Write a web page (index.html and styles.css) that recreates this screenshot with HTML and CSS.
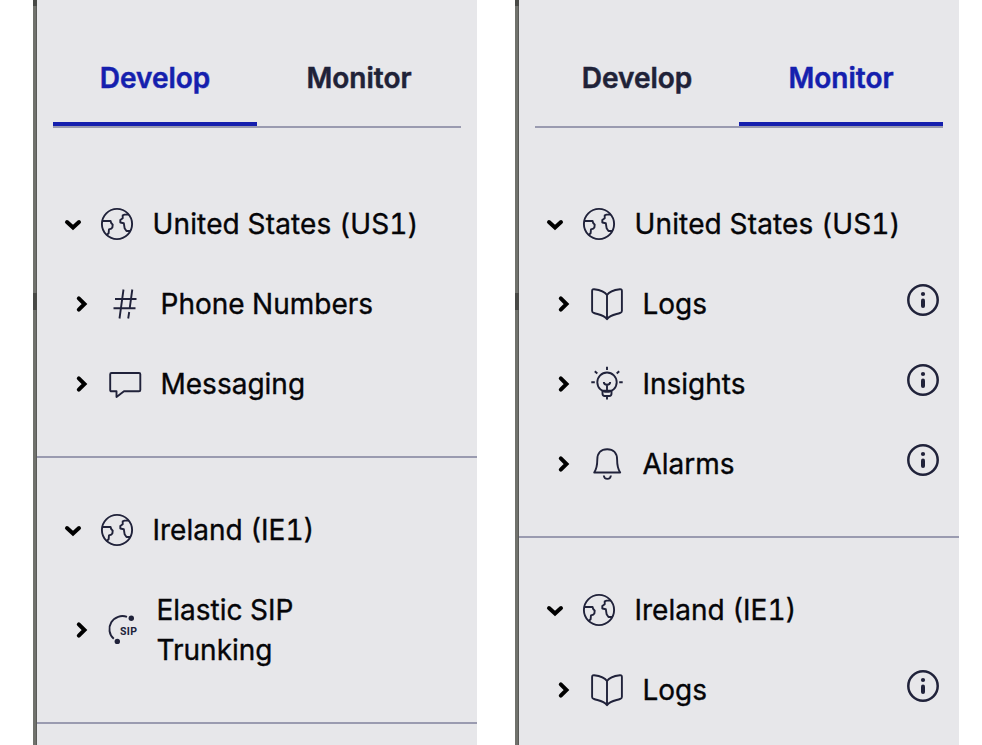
FILE: index.html
```
<!DOCTYPE html>
<html lang="en">
<head>
<meta charset="utf-8">
<title>Console navigation</title>
<link rel="stylesheet" href="styles.css">
</head>
<body>
<svg class="defs" width="0" height="0" aria-hidden="true">
  <symbol id="down" viewBox="0 0 16 16"><path d="M2 6 8 11.500l6-5.500" stroke-width="4" stroke-linecap="round"/></symbol>
  <symbol id="right" viewBox="0 0 16 16"><path d="M4.800 2.300 10.500 8l-5.700 5.700" stroke-width="4" stroke-linecap="round"/></symbol>
  <symbol id="globe" viewBox="0 0 32 32"><circle cx="16" cy="16" r="15.100"/><path d="M1.400 13H9.600L10.200 15L11.700 16.600L11.400 19.400L10.300 20.600L8 21.300L7.600 25.300L5.400 27.300M27.800 6.600H23.500L21.700 7.300V10.200L19.300 12V14.500L22.800 15.200L23.600 20.200L25.500 23H29"/></symbol>
  <symbol id="hash" viewBox="0 0 32 32"><path d="M14.500 1.500 10.500 30.500M23.300 1.500 20.600 21M20.200 24 19.200 30.500M6 11h21.500M4.500 20.200h22"/></symbol>
  <symbol id="message" viewBox="0 0 32 32"><path d="M2.500 5h27.500q1.300 0 1.300 1.300v15.700q0 1.300-1.300 1.300H15l-7.500 5.700v-5.700h-5q-1.300 0-1.300-1.300V6.300Q1.200 5 2.500 5Z"/></symbol>
  <symbol id="book" viewBox="0 0 32 32"><path d="M16 7v24.200C12.500 26.500 7 26.500 3 25q-1.900-.5-1.900-2V3q0-2 2-1.800C8 1.800 13.500 3 16 7 18.500 3 24 1.800 28.900 1.200q2-.2 2 1.800v20q0 1.500-1.900 2C25 26.500 19.500 26.500 16 31.200"/></symbol>
  <symbol id="bulb" viewBox="0 0 32 32"><circle cx="16" cy="14.200" r="9.700"/><path d="M16-1.300V2M.3 14.200h3.500M28.200 14.200h3.500M3.800 3.200l2.500 2.300M28.200 3.200l-2.500 2.300M16 23v-6.300c-2.300 0-3.200-1-3.200-2.700M16 16.700c2.300 0 3.200-1 3.200-2.700M11.500 22.700h9v2.800q0 2.500-2.200 2.500h-4.600q-2.200 0-2.200-2.500ZM16 28.300v3.200"/></symbol>
  <symbol id="bell" viewBox="0 0 32 32"><path d="M3.200 24.500C5.500 21 6.300 18 6.300 11.500 6.300 5 10 1.200 16.200 1.200S26.100 5 26.100 11.500c0 6.500.8 9.500 3.100 13ZM12.800 27.500c.5 4.500 6.600 4.500 7.100 0"/></symbol>
  <symbol id="info" viewBox="0 0 32 32"><circle cx="16" cy="16" r="14.700" stroke-width="2.500"/><path d="M16 16.500v5.400" stroke-width="4" stroke-linecap="round"/><circle class="solid" cx="16" cy="10" r="2.100"/></symbol>
</svg>
<main class="board">
  <section class="panel">
    <nav class="tabs"><a class="tab active">Develop</a><a class="tab">Monitor</a></nav>
    <div class="group first">
      <div class="row heading"><svg class="chevron"><use href="#down"/></svg><svg class="icon"><use href="#globe"/></svg><span class="label">United States (US1)</span></div>
      <div class="row"><svg class="chevron"><use href="#right"/></svg><svg class="icon"><use href="#hash"/></svg><span class="label">Phone Numbers</span></div>
      <div class="row"><svg class="chevron"><use href="#right"/></svg><svg class="icon"><use href="#message"/></svg><span class="label">Messaging</span></div>
    </div>
    <div class="group">
      <div class="row heading"><svg class="chevron"><use href="#down"/></svg><svg class="icon"><use href="#globe"/></svg><span class="label">Ireland (IE1)</span></div>
      <div class="row tall"><svg class="chevron"><use href="#right"/></svg><svg class="icon" viewBox="0 0 32 32"><path d="M18 2.900A13 13 0 0 0 4.800 24.800"/><g class="solid"><circle cx="22.300" cy="4.300" r="2.700"/><circle cx="8.300" cy="27.400" r="2.700"/><text x="11" y="20.800" textLength="17" lengthAdjust="spacing">SIP</text></g></svg><span class="label">Elastic SIP<br>Trunking</span></div>
    </div>
  </section>
  <section class="panel">
    <nav class="tabs"><a class="tab">Develop</a><a class="tab active">Monitor</a></nav>
    <div class="group first">
      <div class="row heading"><svg class="chevron"><use href="#down"/></svg><svg class="icon"><use href="#globe"/></svg><span class="label">United States (US1)</span></div>
      <div class="row"><svg class="chevron"><use href="#right"/></svg><svg class="icon"><use href="#book"/></svg><span class="label">Logs</span><svg class="icon info"><use href="#info"/></svg></div>
      <div class="row"><svg class="chevron"><use href="#right"/></svg><svg class="icon"><use href="#bulb"/></svg><span class="label">Insights</span><svg class="icon info"><use href="#info"/></svg></div>
      <div class="row"><svg class="chevron"><use href="#right"/></svg><svg class="icon"><use href="#bell"/></svg><span class="label">Alarms</span><svg class="icon info"><use href="#info"/></svg></div>
    </div>
    <div class="group">
      <div class="row heading"><svg class="chevron"><use href="#down"/></svg><svg class="icon"><use href="#globe"/></svg><span class="label">Ireland (IE1)</span></div>
      <div class="row"><svg class="chevron"><use href="#right"/></svg><svg class="icon"><use href="#book"/></svg><span class="label">Logs</span><svg class="icon info"><use href="#info"/></svg></div>
    </div>
  </section>
</main>
</body>
</html>
```
FILE: styles.css
```
* { box-sizing: border-box; }
body { margin: 0; background: #fff; font-family: Inter, sans-serif; overflow: hidden; }
.defs { display: block; }
.board { display: flex; gap: 38px; height: 745px; padding-left: 33px; overflow: hidden; }
.panel {
  width: 444px;
  flex: none;
  padding-left: 4px;
  background:
    linear-gradient(#484946 0 6px, transparent 6px 293px, #484946 293px 310px, transparent 310px) 0 0 / 4px 100% no-repeat,
    linear-gradient(90deg, #70716c 0 3px, #5a5b58 3px) 0 0 / 4px 100% no-repeat,
    #e7e7ea;
}
.tabs { display: flex; height: 128px; margin: 0 16px; padding-top: 30px; border-bottom: 2px solid #9a9bb0; }
.tab { flex: 1; padding-top: 28px; border-bottom: 4px solid transparent; text-align: center; font-size: 28px; line-height: 40px; font-weight: 600; color: #1f2238; -webkit-text-stroke: 0.5px; }
.tab.active { color: #151fae; border-color: #151fae; }
.group { padding: 32px 0; border-bottom: 2px solid #9a9bb0; }
.group.first { padding-top: 56px; }
.row { display: flex; align-items: center; height: 80px; padding: 0 20px 0 37px; }
.row.heading { padding-left: 28px; }
.row.tall { height: 120px; }
.row svg { flex: none; display: block; fill: none; stroke: #20223a; stroke-width: 1.9; stroke-linejoin: round; overflow: visible; }
.row .chevron { width: 16px; height: 16px; stroke: #000; stroke-linejoin: miter; }
.icon { width: 32px; height: 32px; margin-left: 19px; }
.heading .icon { margin-left: 20px; }
.label { flex: 1; margin-left: 19.5px; font-size: 28px; line-height: 40px; white-space: nowrap; color: #050508; font-variant-numeric: tabular-nums; -webkit-text-stroke: 0.35px; }
.first .heading .label { letter-spacing: 0.15px; }
.tall .label { margin-left: 15.5px; }
.row .info { margin: -8px 0 0; }
symbol { overflow: visible; }
.solid { fill: #20223a; stroke: none; }
.solid text { font: 700 10.5px Roboto, sans-serif; }
```
